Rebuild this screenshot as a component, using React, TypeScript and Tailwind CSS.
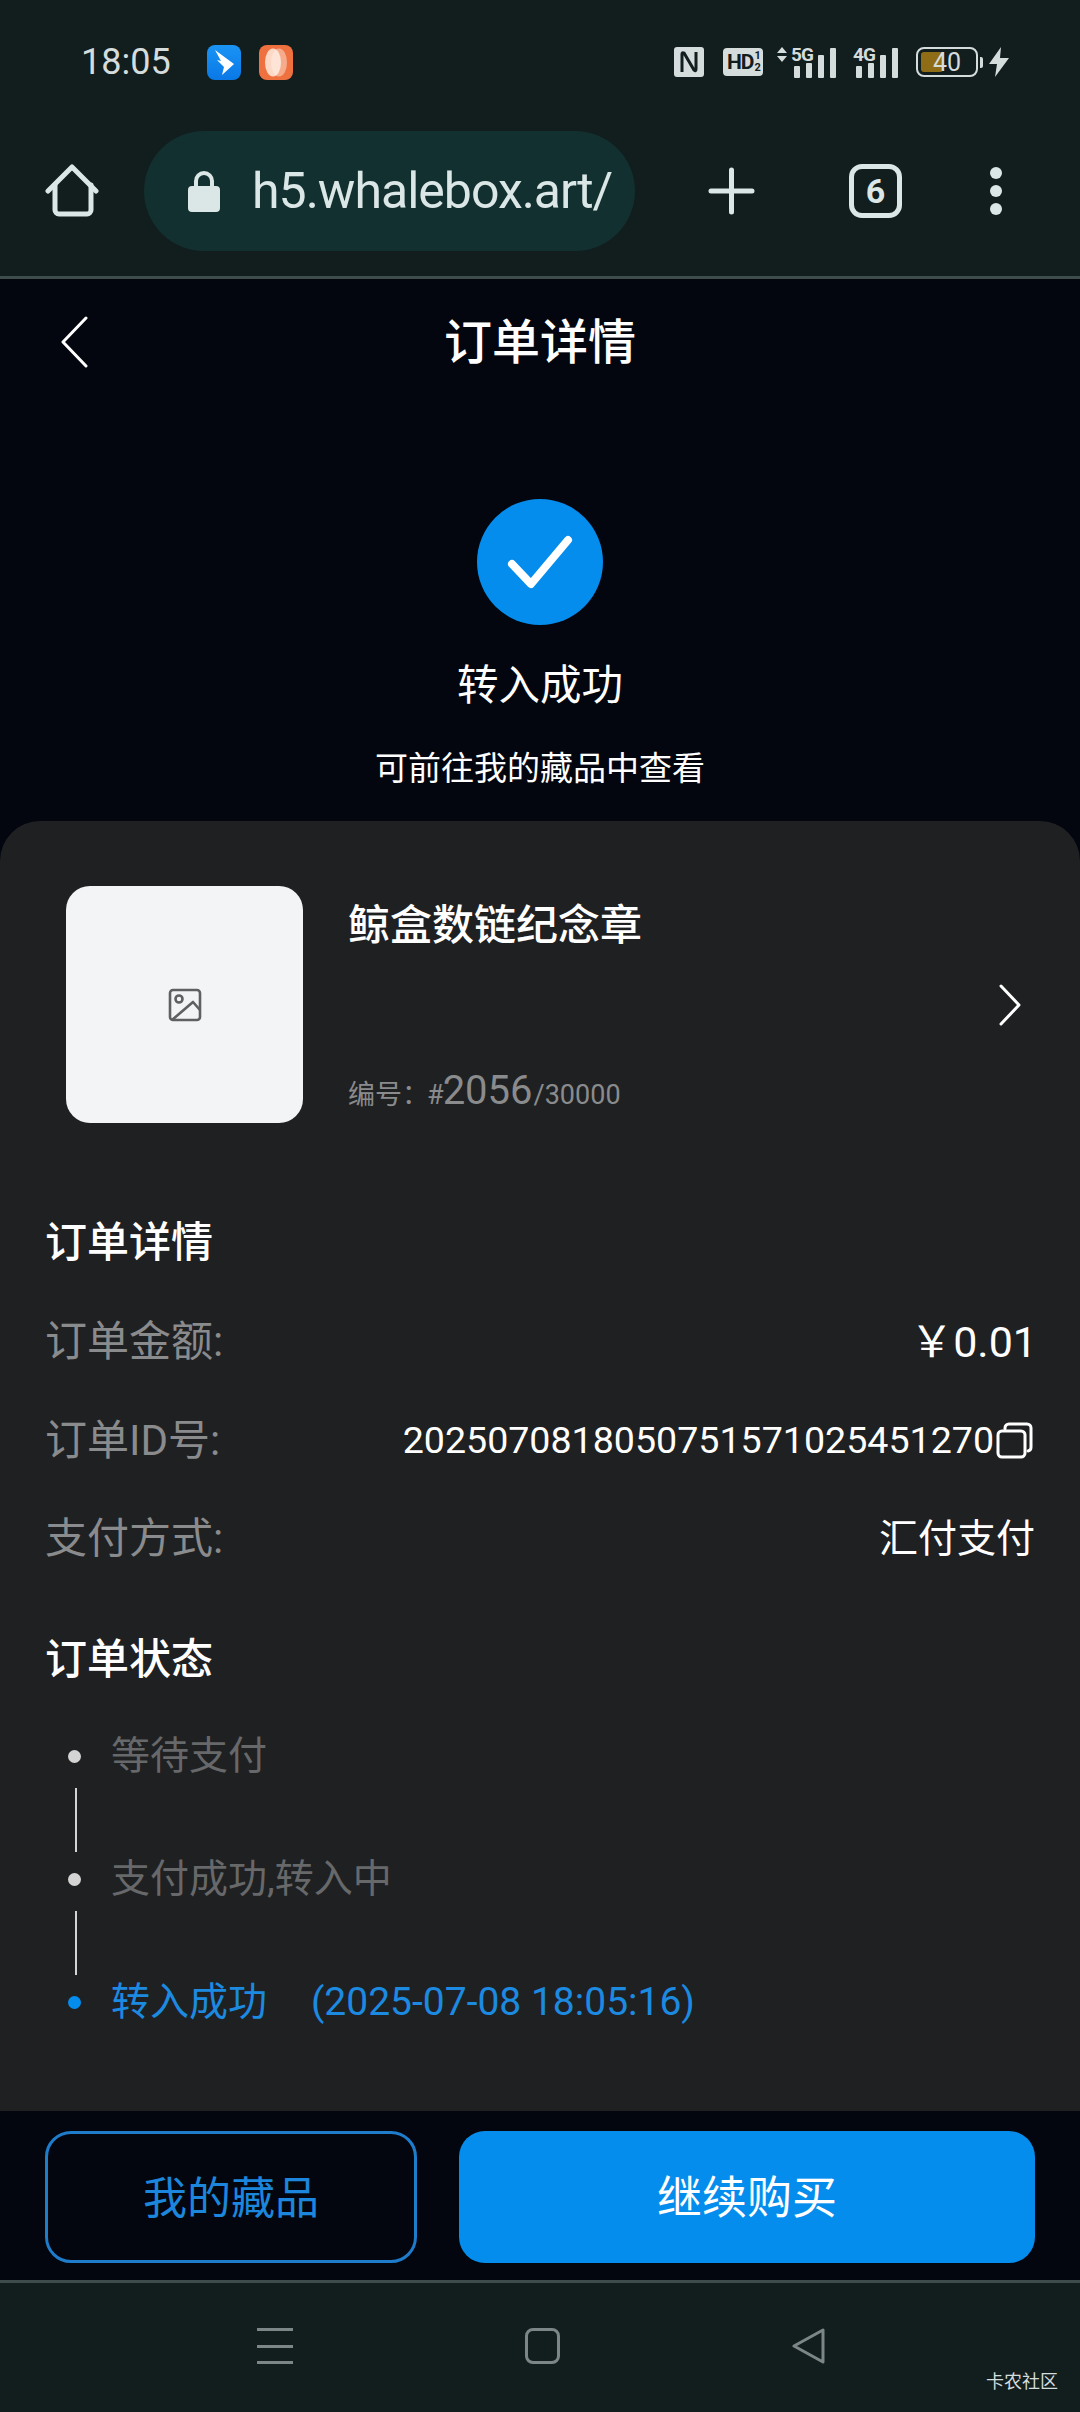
const font = { fontFamily: '"Roboto", "Noto Sans CJK SC", sans-serif' };

function SignalBars({ label, arrows, inset }: { label: string; arrows?: boolean; inset: string }) {
  return (
    <div className={`relative flex items-end gap-[6px] h-[31px] ${inset}`}>
      <div className="absolute left-0 top-0 flex items-center gap-[4px]">
        {arrows && (
          <svg width="10" height="15" viewBox="0 0 10 15" className="fill-[#d5dcdc]">
            <path d="M5 0l5 6H0zM5 15L0 9h10z" />
          </svg>
        )}
        <span className="text-[19px] leading-[15px] font-bold text-[#d5dcdc] tracking-[-1px]">{label}</span>
      </div>
      <div className="w-[6px] h-[12px] bg-[#d5dcdc] rounded-[1px]" />
      <div className="w-[6px] h-[15px] bg-[#d5dcdc] rounded-[1px]" />
      <div className="w-[6px] h-[23px] bg-[#d5dcdc] rounded-[1px]" />
      <div className="w-[6px] h-[30px] bg-[#d5dcdc] rounded-[1px]" />
    </div>
  );
}

function StatusBar() {
  return (
    <div className="h-[124px] flex items-center pl-[81px] pr-[71px]">
      <span className="text-[36px] leading-none text-[#d5dcdc] w-[126px]">18:05</span>
      <div className="w-[34px] h-[35px] rounded-[8px] bg-linear-to-b from-[#1a94f5] to-[#0a78e6]">
        <svg width="34" height="35" viewBox="0 0 34 35" className="fill-white">
          <path d="M8 5l19 14-12 11 2-8-7-7 4 1z" />
        </svg>
      </div>
      <div className="ml-[18px] w-[34px] h-[35px] rounded-[8px] bg-[#ef7140]">
        <svg width="34" height="35" viewBox="0 0 34 35" className="fill-[#fff3e8]">
          <ellipse cx="14" cy="17.5" rx="8" ry="14" opacity="0.8" />
          <ellipse cx="20" cy="17.5" rx="8" ry="14" opacity="0.45" />
        </svg>
      </div>
      <div className="ml-auto flex items-center">
        <svg width="30" height="30" viewBox="0 0 30 30">
          <rect width="30" height="30" rx="3" fill="#d5dcdc" />
          <path d="M8 25V7q0-2 2-1l10 17q2 2 2-1V5" fill="none" stroke="#121d1e" strokeWidth="3" />
        </svg>
        <div className="ml-[19px] w-[40px] h-[28px] rounded-[4px] bg-[#d5dcdc] flex items-center pl-[4px]">
          <span className="text-[21px] leading-none font-bold text-[#121d1e] tracking-[-1px]">HD</span>
          <span className="ml-[1px] flex flex-col text-[11px] leading-[12px] font-bold text-[#121d1e]">
            <span>1</span>
            <span>2</span>
          </span>
        </div>
        <div className="ml-[14px]">
          <SignalBars label="5G" arrows inset="pl-[17px]" />
        </div>
        <div className="ml-[17px]">
          <SignalBars label="4G" inset="pl-[3px]" />
        </div>
        <div className="ml-[18px] flex items-center">
          <div className="relative w-[62px] h-[30px] rounded-[8px] border-2 border-[#d5dcdc] p-[3px]">
            <div className="w-[22px] h-full rounded-[3px] bg-[#8f6d17]" />
            <span className="absolute inset-0 flex items-center justify-center text-[25px] leading-none text-[#d5dcdc]">40</span>
          </div>
          <div className="ml-[2px] w-[3px] h-[11px] rounded-r-[2px] bg-[#d5dcdc]" />
        </div>
        <svg width="20" height="30" viewBox="0 0 20 30" className="ml-[6px] fill-[#d5dcdc]">
          <path d="M12 0L0 17h8l-2 13 14-19h-9z" />
        </svg>
      </div>
    </div>
  );
}

function Toolbar() {
  return (
    <div className="h-[152px] flex items-start pt-[7px]">
      <div className="w-[144px] h-[120px] flex items-center pl-[45px]">
        <svg width="55" height="54" viewBox="0 0 55 54" fill="none" stroke="#dbe6e6" strokeWidth="5" strokeLinejoin="round" strokeLinecap="round">
          <path d="M3 27L27 3l24 24" />
          <path d="M10 21v25a4 4 0 004 4h28a4 4 0 004-4V21" />
        </svg>
      </div>
      <div className="w-[491px] h-[120px] rounded-[60px] bg-[#12302f] flex items-center pl-[44px]">
        <svg width="32" height="42" viewBox="0 0 32 42">
          <path d="M8 18v-7a8 8 0 0116 0v7" fill="none" stroke="#dbe6e6" strokeWidth="4" />
          <rect y="16" width="32" height="26" rx="4" fill="#dbe6e6" />
        </svg>
        <span className="ml-[32px] text-[50px] leading-none tracking-[-1px] text-[#dbe6e6] whitespace-nowrap">h5.whalebox.art/</span>
      </div>
      <div className="h-[120px] flex items-center pl-[73px]">
        <svg width="47" height="48" viewBox="0 0 47 48" stroke="#dbe6e6" strokeWidth="5" strokeLinecap="round">
          <path d="M23.5 3v42M3 24h41" />
        </svg>
        <div className="ml-[94px] w-[53px] h-[54px] rounded-[13px] border-[5px] border-[#dbe6e6] flex items-center justify-center text-[34px] leading-none font-bold text-[#dbe6e6]">
          6
        </div>
        <div className="ml-[88px] flex flex-col gap-[6px]">
          <div className="w-[12px] h-[12px] rounded-full bg-[#dbe6e6]" />
          <div className="w-[12px] h-[12px] rounded-full bg-[#dbe6e6]" />
          <div className="w-[12px] h-[12px] rounded-full bg-[#dbe6e6]" />
        </div>
      </div>
    </div>
  );
}

function DetailRow({ label, children }: { label: string; children: React.ReactNode }) {
  return (
    <div className="h-[98.5px] flex items-center justify-between">
      <span className="text-[42px] leading-none text-[#8a8b8d]">{label}</span>
      <div className="flex items-center leading-none text-white">{children}</div>
    </div>
  );
}

function StatusStep({ color, text, dot, time }: { color: string; text: string; dot: string; time?: string }) {
  return (
    <div className="h-[56px] flex items-center pl-[23px]">
      <div className={`w-[13px] h-[13px] rounded-full ${dot}`} />
      <span className={`ml-[30px] text-[39px] leading-none whitespace-nowrap ${color}`}>{text}</span>
      {time && <span className={`ml-[44px] text-[39px] leading-none whitespace-nowrap ${color}`}>{time}</span>}
    </div>
  );
}

function StepLine() {
  return (
    <div className="h-[67px] pt-[3px] pl-[30px]">
      <div className="w-[2px] h-[64px] bg-[#d4d4d4]" />
    </div>
  );
}

export default function App() {
  return (
    <div style={font} className="relative w-[1080px] h-[2412px] flex flex-col bg-[#03060e] overflow-hidden">
      <div className="bg-[#121d1e] border-b-[3px] border-[#3e4c4c]">
        <StatusBar />
        <Toolbar />
      </div>

      <div className="h-[126px] flex items-center justify-center relative pt-[2px]">
        <svg width="30" height="52" viewBox="0 0 30 52" fill="none" stroke="white" strokeWidth="3" strokeLinecap="round" strokeLinejoin="round" className="absolute left-[60px] top-[37px]">
          <path d="M26 2L3 26l23 24" />
        </svg>
        <span className="text-[48px] leading-none font-medium text-white">订单详情</span>
      </div>

      <div className="flex flex-col items-center mt-[94px] h-[322px]">
        <div className="w-[126px] h-[126px] rounded-full bg-[#058ded] flex items-center justify-center">
          <svg width="66" height="54" viewBox="0 0 66 54" fill="none" stroke="white" strokeWidth="8" strokeLinecap="round" strokeLinejoin="round">
            <path d="M5 29l19 20L61 5" />
          </svg>
        </div>
        <span className="mt-[36px] text-[41.5px] leading-[50px] text-white">转入成功</span>
        <span className="mt-[33px] text-[33px] leading-[50px] text-white">可前往我的藏品中查看</span>
      </div>

      <div className="flex-1 bg-[#1f2022] rounded-t-[40px] pt-[65px]">
        <div className="flex h-[237px] pl-[66px] pr-[58px]">
          <div className="w-[237px] h-[237px] rounded-[24px] bg-[#f3f4f6] flex items-center justify-center">
            <svg width="34" height="34" viewBox="0 0 34 34" fill="none" stroke="#5f6062" strokeWidth="2.6" strokeLinejoin="round">
              <rect x="2" y="2" width="30" height="30" rx="3" />
              <circle cx="11" cy="11" r="3.5" />
              <path d="M4 32l21-18 7 8" />
            </svg>
          </div>
          <div className="ml-[45px] flex-1 flex flex-col justify-between pt-[15px] pb-[8px]">
            <span className="text-[42px] leading-[50px] font-medium text-white">鲸盒数链纪念章</span>
            <div className="flex items-baseline text-[#8a8b8d] text-[27px] leading-[40px]">
              <span className="mr-[-2px]">编号：</span>
              <span className="mr-[-1px]">#</span>
              <span className="text-[40px] mr-[1px]">2056</span>
              <span>/30000</span>
            </div>
          </div>
          <svg width="24" height="44" viewBox="0 0 24 44" fill="none" stroke="white" strokeWidth="3" strokeLinecap="round" strokeLinejoin="round" className="self-center">
            <path d="M3 3l18 19L3 41" />
          </svg>
        </div>

        <div className="pl-[45px] pr-[45px]">
          <h2 className="mt-[90px] text-[42px] leading-[60px] font-medium text-white">订单详情</h2>
          <div className="mt-[20px]">
            <DetailRow label="订单金额:">
              <span className="text-[43px] mr-[-2px]">￥0.01</span>
            </DetailRow>
            <DetailRow label="订单ID号:">
              <span className="text-[37.6px]">2025070818050751571025451270</span>
              <svg width="37" height="37" viewBox="0 0 37 37" fill="none" stroke="white" strokeWidth="3" strokeLinejoin="round" className="ml-[2px] mr-[2px]">
                <rect x="2" y="9" width="27" height="26" rx="4" />
                <path d="M9 7V6a4 4 0 014-4h18a4 4 0 014 4v19a4 4 0 01-3 4" strokeLinecap="round" />
              </svg>
            </DetailRow>
            <DetailRow label="支付方式:">
              <span className="text-[39px]">汇付支付</span>
            </DetailRow>
          </div>
          <h2 className="mt-[41px] text-[42px] leading-[60px] font-medium text-white">订单状态</h2>
          <div className="mt-[39px]">
            <StatusStep color="text-[#67686a]" dot="bg-[#d4d4d4]" text="等待支付" />
            <StepLine />
            <StatusStep color="text-[#67686a]" dot="bg-[#d4d4d4]" text="支付成功,转入中" />
            <StepLine />
            <StatusStep color="text-[#1c8ae0]" dot="bg-[#058ded]" text="转入成功" time="(2025-07-08 18:05:16)" />
          </div>
        </div>
      </div>

      <div className="h-[169px] flex gap-[42px] px-[45px] pt-[20px]">
        <button className="w-[372px] h-[132px] pt-[4px] rounded-[26px] border-[3px] border-[#1e7ccb] text-[44px] text-[#1c86dc]">我的藏品</button>
        <button className="flex-1 h-[132px] pt-[4px] rounded-[26px] bg-[#058ded] text-[45px] text-white">继续购买</button>
      </div>

      <div className="h-[132px] bg-[#121d1e] border-t-[3px] border-[#3e4c4c] flex items-start pl-[257px] pt-[45px] gap-[232px]">
        <div className="w-[36px] h-[36px] flex flex-col justify-between">
          <div className="h-[3px] bg-[#7c8686]" />
          <div className="h-[3px] bg-[#7c8686]" />
          <div className="h-[3px] bg-[#7c8686]" />
        </div>
        <div className="w-[35px] h-[36px] rounded-[8px] border-[3px] border-[#7c8686]" />
        <svg width="33" height="36" viewBox="0 0 33 36" fill="none" stroke="#7c8686" strokeWidth="3" strokeLinejoin="round">
          <path d="M31 2v32L2 18z" />
        </svg>
      </div>

      <span className="absolute right-[22px] bottom-[21px] text-[18px] leading-none text-[#d5dcdc]">卡农社区</span>
    </div>
  );
}
